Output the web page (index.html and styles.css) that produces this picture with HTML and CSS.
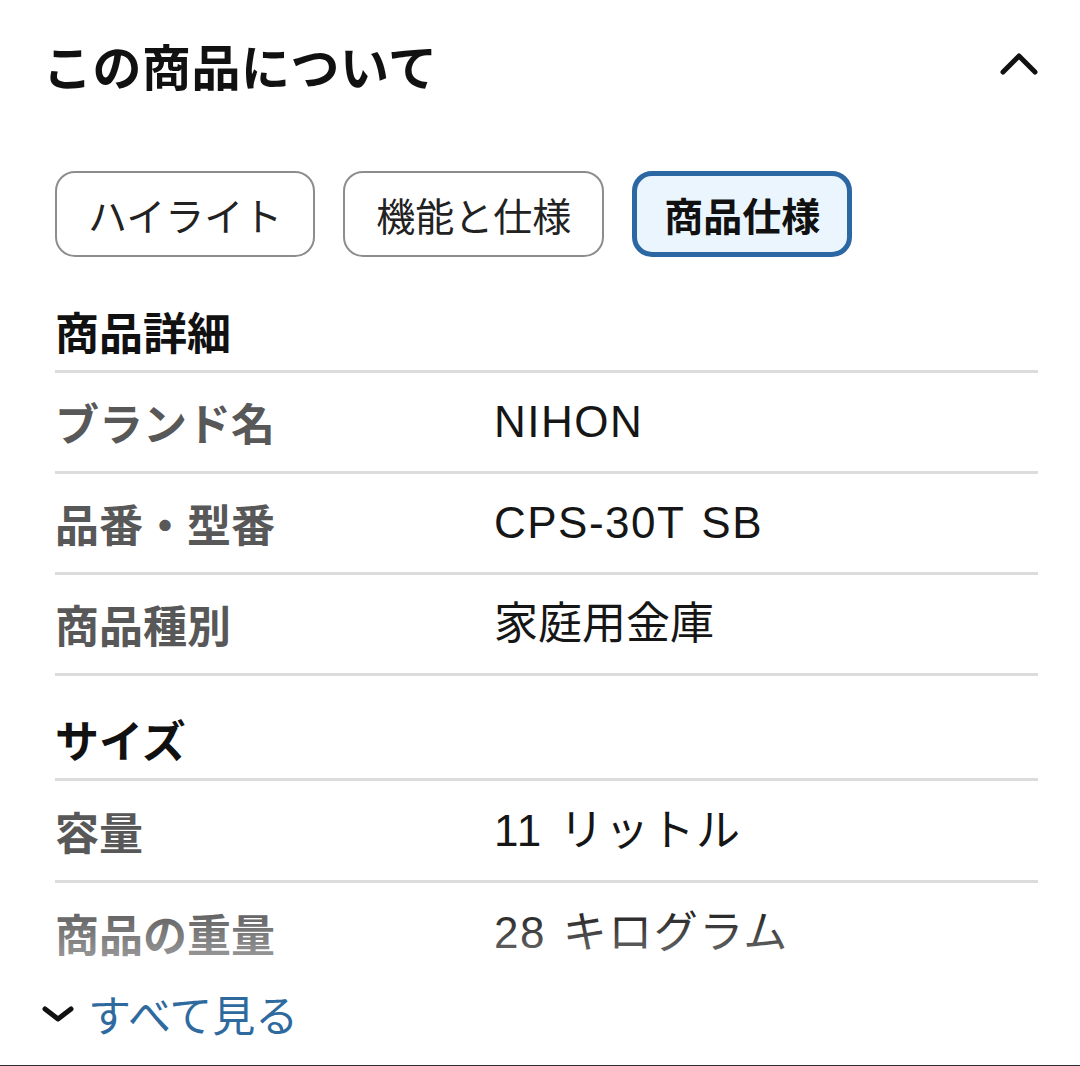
FILE: index.html
```html
<!DOCTYPE html>
<html lang="ja">
<head>
<meta charset="utf-8">
<title>この商品について</title>
<link rel="stylesheet" href="styles.css">
</head>
<body>
<div class="page">
  <header class="header">
    <h1 class="title">この商品について</h1>
    <svg class="chev-up" width="38" height="24" viewBox="0 0 38 24" aria-hidden="true">
      <polyline points="3,21 19,5 35,21" fill="none" stroke="#111" stroke-width="5" stroke-linecap="round" stroke-linejoin="round"/>
    </svg>
  </header>

  <nav class="tabs">
    <button class="tab">ハイライト</button>
    <button class="tab">機能と仕様</button>
    <button class="tab tab-active">商品仕様</button>
  </nav>

  <section class="specs">
    <div class="sec-head first">商品詳細</div>
    <div class="row"><div class="label">ブランド名</div><div class="value wide">NIHON</div></div>
    <div class="row"><div class="label">品番・型番</div><div class="value wide">CPS-30T SB</div></div>
    <div class="row"><div class="label">商品種別</div><div class="value">家庭用金庫</div></div>
    <div class="sec-head">サイズ</div>
    <div class="row"><div class="label">容量</div><div class="value wide">11 リットル</div></div>
    <div class="row last"><div class="label">商品の重量</div><div class="value wide">28 キログラム</div></div>
  </section>

  <div class="see-all">
    <svg class="chev-down" width="32" height="16" viewBox="0 0 32 16" aria-hidden="true">
      <polyline points="3,3 16,13 29,3" fill="none" stroke="#111" stroke-width="5" stroke-linecap="round" stroke-linejoin="round"/>
    </svg>
    <a class="see-link" href="#">すべて見る</a>
  </div>
  <div class="bottom-rule"></div>
</div>
</body>
</html>
```

FILE: styles.css
```css
* { box-sizing: border-box; }

html, body {
  margin: 0;
  padding: 0;
  background: #ffffff;
}

body {
  font-family: "Noto Sans CJK JP", "Noto Sans", sans-serif;
  color: #111111;
}

.page {
  width: 1080px;
  height: 1066px;
  overflow: hidden;
}

.header {
  height: 136px;
  display: flex;
  align-items: center;
  justify-content: space-between;
  padding: 0 42px 7px 43px;
}

.title {
  margin: 0;
  font-size: 49px;
  line-height: 1;
  font-weight: 700;
  color: #111111;
  letter-spacing: 0.5px;
}

.chev-up {
  display: block;
  margin-top: -4px;
}

.tabs {
  margin-top: 35px;
  padding-left: 55px;
  display: flex;
  gap: 28px;
}

.tab {
  height: 86px;
  padding: 0 31px;
  border: 2px solid #8d8d8d;
  border-radius: 20px;
  background: #ffffff;
  font-family: "Noto Sans CJK JP", sans-serif;
  font-size: 39px;
  line-height: 1;
  font-weight: 400;
  color: #222222;
  display: flex;
  align-items: center;
}

.tab-active {
  border: 5px solid #2b67a3;
  padding: 0 27px;
  background: #eaf5fd;
  font-weight: 700;
  color: #111111;
}

.specs {
  margin: 0 42px 0 55px;
}

.sec-head {
  height: 105px;
  padding: 0 0 17px 0;
  display: flex;
  align-items: flex-end;
  font-size: 44px;
  line-height: 1;
  font-weight: 700;
  color: #111111;
  border-bottom: 3px solid #dcdcdc;
}

.sec-head.first {
  height: 103px;
  margin-top: 13px;
}

.row {
  height: 101px;
  display: grid;
  grid-template-columns: 439px 1fr;
  align-items: center;
  border-bottom: 3px solid #dcdcdc;
  font-size: 44px;
  line-height: 1;
}

.row:nth-last-child(2) {
  height: 102px;
}

.label {
  font-weight: 700;
  color: #585858;
}

.value {
  font-family: "Liberation Sans", "Noto Sans CJK JP", sans-serif;
  font-weight: 400;
  color: #161616;
}

.value.wide {
  letter-spacing: 1.5px;
  word-spacing: 3px;
}

.row.last {
  position: relative;
  border-bottom: none;
  height: 100px;
}

.row.last::after {
  content: "";
  position: absolute;
  left: 0;
  right: 0;
  top: 20px;
  bottom: 0;
  background: linear-gradient(to bottom, rgba(255,255,255,0) 0%, rgba(255,255,255,0.55) 100%);
}

.see-all {
  height: 82px;
  display: flex;
  align-items: center;
  gap: 14px;
  padding: 0 0 22px 42px;
}

.chev-down {
  display: block;
  margin-top: 2px;
}

.see-link {
  font-size: 43px;
  line-height: 1;
  color: #2f6a9f;
  text-decoration: none;
}

.bottom-rule {
  height: 3px;
  background: #2e2e2e;
}
```
